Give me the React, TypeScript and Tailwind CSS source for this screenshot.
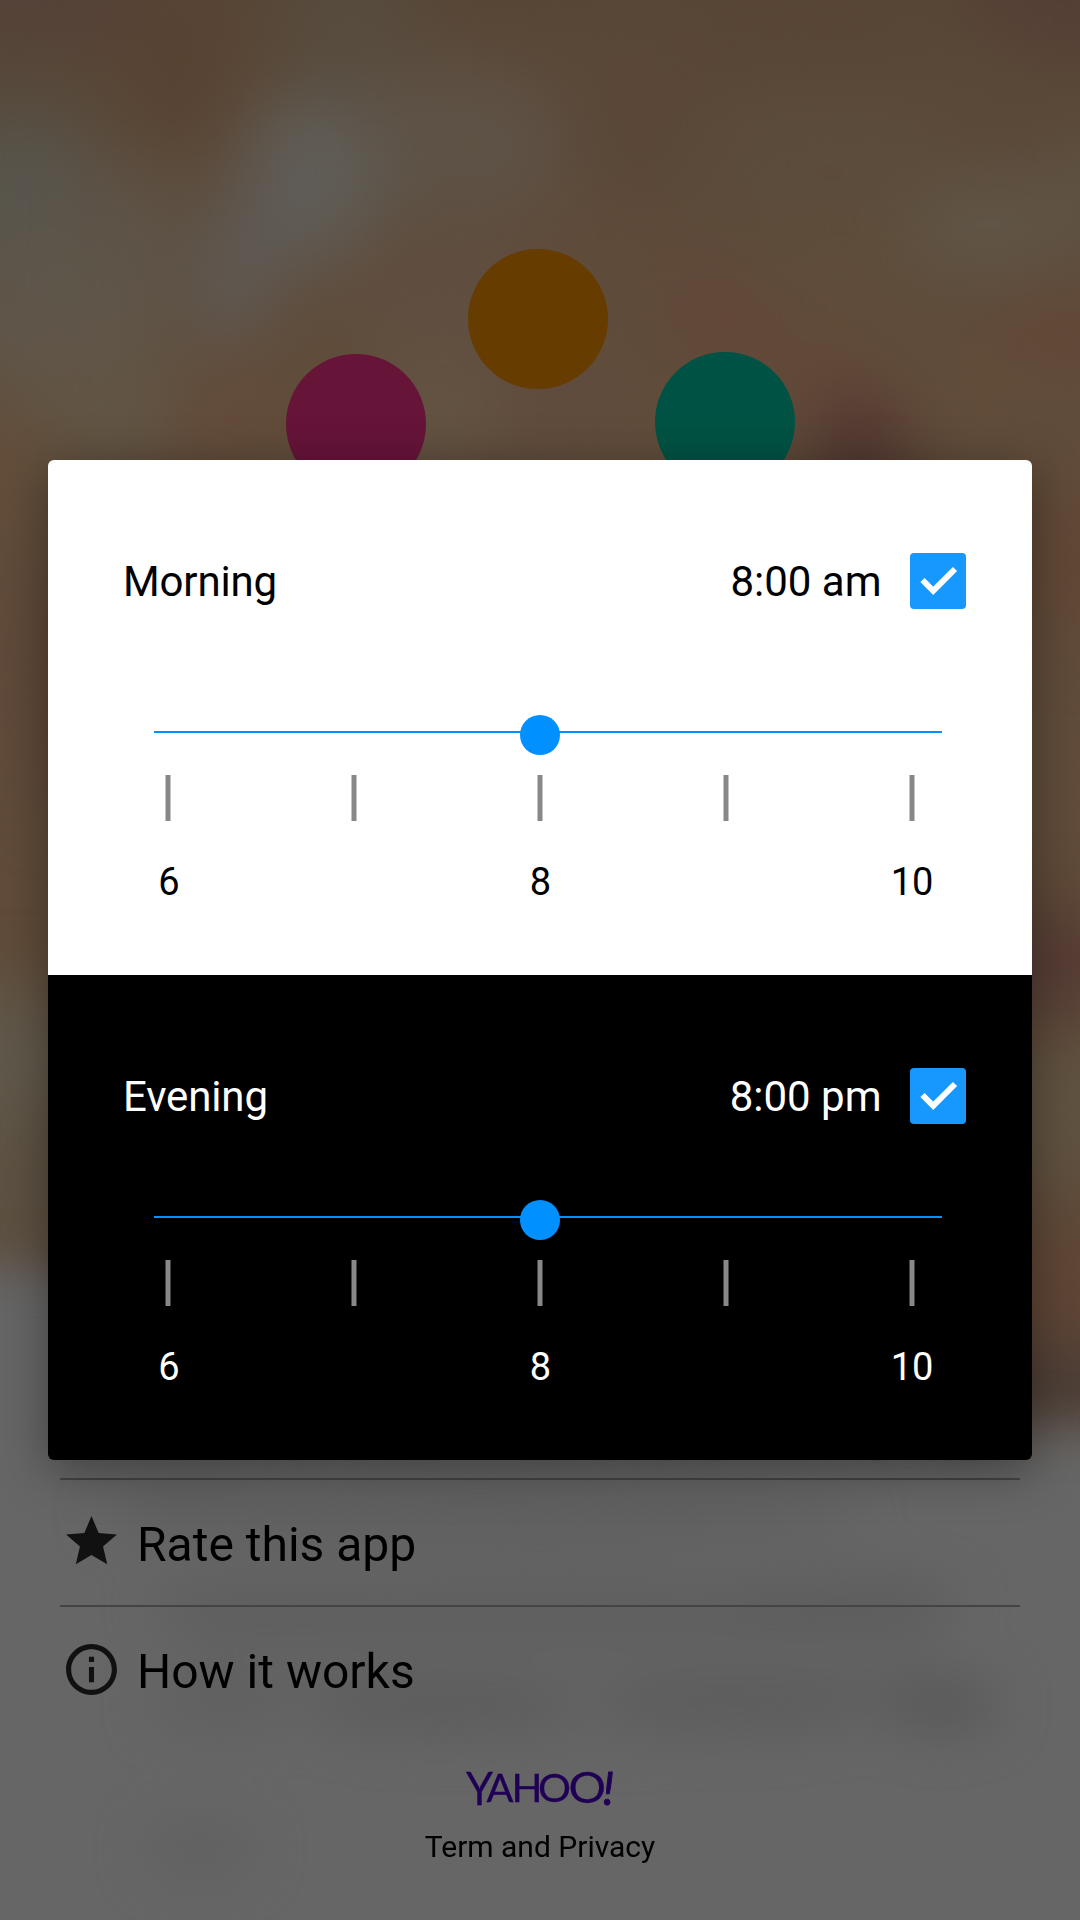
import React from "react";

type Blob = { x: number; y: number; rx: number; ry: number; c: string; r?: number };

const blobs: Blob[] = [
  { x: 20, y: -10, rx: 120, ry: 70, c: "#554238" },
  { x: 175, y: 60, rx: 60, ry: 90, c: "#584333" },
  { x: 350, y: 30, rx: 70, ry: 90, c: "#574c3e" },
  { x: 10, y: 110, rx: 90, ry: 50, c: "#564a3b" },
  { x: 640, y: 110, rx: 90, ry: 90, c: "#5a4737" },
  { x: 800, y: 30, rx: 120, ry: 40, c: "#584536" },
  { x: 820, y: 160, rx: 130, ry: 60, c: "#5c4c3b" },
  { x: 1070, y: 0, rx: 100, ry: 60, c: "#543f35" },
  { x: 1010, y: 100, rx: 70, ry: 60, c: "#5a4838" },
  { x: 450, y: 145, rx: 120, ry: 80, c: "#5e5246" },
  { x: 20, y: 200, rx: 90, ry: 75, c: "#58554d" },
  { x: 120, y: 230, rx: 70, ry: 60, c: "#5d5347" },
  { x: 60, y: 320, rx: 110, ry: 80, c: "#5f564a" },
  { x: 100, y: 410, rx: 80, ry: 70, c: "#615545" },
  { x: 310, y: 180, rx: 70, ry: 85, c: "#605d57" },
  { x: 245, y: 255, rx: 42, ry: 98, c: "#5f5a55", r: 18 },
  { x: 440, y: 300, rx: 110, ry: 50, c: "#604e40" },
  { x: 220, y: 425, rx: 45, ry: 80, c: "#634b39", r: 30 },
  { x: 10, y: 480, rx: 70, ry: 60, c: "#634e3a" },
  { x: 600, y: 245, rx: 90, ry: 40, c: "#604b3a" },
  { x: 440, y: 410, rx: 70, ry: 60, c: "#635343" },
  { x: 560, y: 410, rx: 70, ry: 60, c: "#604c3d" },
  { x: 840, y: 280, rx: 90, ry: 60, c: "#5f4d3a" },
  { x: 990, y: 228, rx: 85, ry: 50, c: "#605547" },
  { x: 1080, y: 200, rx: 50, ry: 50, c: "#5f5344" },
  { x: 1070, y: 332, rx: 100, ry: 40, c: "#624837" },
  { x: 720, y: 320, rx: 65, ry: 50, c: "#624739", r: 45 },
  { x: 820, y: 370, rx: 60, ry: 50, c: "#624938" },
  { x: 950, y: 410, rx: 80, ry: 60, c: "#614d3a" },
  { x: 860, y: 455, rx: 52, ry: 60, c: "#513631" },
  { x: 10, y: 1060, rx: 90, ry: 75, c: "#60594b" },
  { x: 10, y: 1190, rx: 90, ry: 70, c: "#5d5243" },
  { x: 60, y: 680, rx: 50, ry: 130, c: "#5f483a" },
  { x: 1070, y: 560, rx: 60, ry: 80, c: "#624836" },
  { x: 1060, y: 965, rx: 50, ry: 60, c: "#543934" },
  { x: 1060, y: 1110, rx: 80, ry: 80, c: "#605341" },
  { x: 1060, y: 1300, rx: 80, ry: 80, c: "#604636" },
  { x: 1070, y: 1390, rx: 80, ry: 40, c: "#483c37" },
];

const smudges: Blob[] = [
  { x: 190, y: 1505, rx: 60, ry: 25, c: "#5d5d5d" },
  { x: 480, y: 1515, rx: 380, ry: 30, c: "#5f5f5f" },
  { x: 560, y: 1650, rx: 380, ry: 90, c: "#636363" },
  { x: 290, y: 1608, rx: 140, ry: 30, c: "#5e5e5e" },
  { x: 540, y: 1612, rx: 360, ry: 28, c: "#5f5f5f" },
  { x: 840, y: 1605, rx: 120, ry: 30, c: "#5d5d5d" },
  { x: 220, y: 1705, rx: 70, ry: 26, c: "#606060" },
  { x: 440, y: 1708, rx: 130, ry: 30, c: "#5d5d5d" },
  { x: 740, y: 1704, rx: 140, ry: 30, c: "#5d5d5d" },
  { x: 940, y: 1705, rx: 60, ry: 30, c: "#5a5a5a" },
  { x: 200, y: 1850, rx: 55, ry: 30, c: "#616161" },
];

const ellipses = (items: Blob[]) =>
  items.map((b, i) => (
    <ellipse key={i} cx={b.x} cy={b.y} rx={b.rx} ry={b.ry} fill={b.c} transform={`rotate(${b.r ?? 0} ${b.x} ${b.y})`} />
  ));

function Backdrop() {
  return (
    <svg className="absolute inset-0" width="1080" height="1920" viewBox="0 0 1080 1920" aria-hidden="true">
      <defs>
        <linearGradient id="wash" x1="0" y1="0" x2="0" y2="1">
          <stop offset="0" stopColor="#584636" />
          <stop offset="0.08" stopColor="#5c4b3a" />
          <stop offset="0.22" stopColor="#614d3b" />
          <stop offset="0.5" stopColor="#614c39" />
          <stop offset="0.7" stopColor="#5e4a39" />
        </linearGradient>
        <filter id="soft" x="-20%" y="-20%" width="140%" height="140%" colorInterpolationFilters="sRGB">
          <feGaussianBlur stdDeviation="33" />
        </filter>
        <filter id="edge" x="-20%" y="-20%" width="140%" height="140%" colorInterpolationFilters="sRGB">
          <feGaussianBlur stdDeviation="24" />
        </filter>
      </defs>
      <rect width="1080" height="1920" fill="url(#wash)" />
      <g filter="url(#soft)">{ellipses(blobs)}</g>
      <path d="M-100 1262 L60 1266 L500 1330 L960 1425 L1180 1432 V2020 H-100Z" fill="#666" filter="url(#edge)" />
      <g filter="url(#edge)">{ellipses(smudges)}</g>
    </svg>
  );
}

function Checkbox() {
  return (
    <svg width="56" height="56" viewBox="0 0 56 56" role="img" aria-label="checked">
      <rect width="56" height="56" rx="4" fill="#1698ff" />
      <path d="M12.5 27 L23.2 37.8 L45 16" fill="none" stroke="#fff" strokeWidth="6" />
    </svg>
  );
}

function TimePanel(props: { label: string; time: string; dark?: boolean }) {
  const { label, time, dark } = props;
  return (
    <section className={dark ? "h-[485px] bg-black pt-[93px] text-white" : "h-[515px] bg-white pt-[93px] text-black"}>
      <div className="flex h-14 items-center pl-[75px] pr-[66.5px] text-[42px] leading-none">
        <span className="flex-1 pt-[2px] tracking-[-0.15px]">{label}</span>
        <span className="mr-[28px] pt-[2px]">{time}</span>
        <Checkbox />
      </div>
      <div className={dark ? "pl-[106px] pr-[90px] pt-[92px]" : "pl-[106px] pr-[90px] pt-[122px]"}>
        <div className="relative h-[2px] bg-[#0090ff]">
          <span className="absolute -top-[16px] left-[366px] size-10 rounded-full bg-[#0090ff]" />
        </div>
        <div className="ml-[11px] mt-[42px] flex w-[750px] justify-between">
          {[0, 1, 2, 3, 4].map((i) => (
            <span key={i} className="h-[46px] w-[6px] border-x border-[#888]/50 bg-[#888] bg-clip-padding" />
          ))}
        </div>
        <div className="-ml-[35px] mt-[39px] flex w-[843px] justify-between text-[38px] leading-[44px]">
          <span className="w-[100px] text-center">6</span>
          <span className="w-[100px] text-center">8</span>
          <span className="w-[100px] text-center">10</span>
        </div>
      </div>
    </section>
  );
}

function MenuRow(props: { label: string; children: React.ReactNode }) {
  return (
    <div className="flex h-[127px] items-center border-t-2 border-[#444]">
      <svg className="-mt-px ml-[1px]" width="61" height="61" viewBox="0 0 24 24" fill="#111" aria-hidden="true">
        {props.children}
      </svg>
      <span className="ml-[15px] pt-[4px] text-[48px] leading-none text-black">{props.label}</span>
    </div>
  );
}

const logoLetters = [
  { ch: "Y", x: 466, y: 1804.5, size: 47, w: 27 },
  { ch: "A", x: 486.5, y: 1801.5, size: 38, w: 27 },
  { ch: "H", x: 511.5, y: 1801.5, size: 38, w: 31 },
  { ch: "O", x: 538, y: 1801.5, size: 38, w: 33 },
  { ch: "O", x: 568.5, y: 1803, size: 43, w: 37.5 },
];

function YahooLogo() {
  return (
    <svg width="180" height="70" viewBox="450 1750 180 70" fill="#1f0054" stroke="#1f0054" role="img" aria-label="Yahoo!">
      <g strokeWidth="0.3" className="font-[Lato,sans-serif]">
        {logoLetters.map((l) => (
          <text key={l.x} x={l.x} y={l.y} fontSize={l.size} textLength={l.w} lengthAdjust="spacingAndGlyphs">
            {l.ch}
          </text>
        ))}
        <text x="602.5" y="1804.5" fontSize="46" fontStyle="italic" strokeWidth="0.9">!</text>
      </g>
    </svg>
  );
}

export default function App() {
  return (
    <main className="relative h-[1920px] w-[1080px] overflow-hidden bg-[#5f4c3a] font-[Roboto,sans-serif]">
      <Backdrop />
      <span className="absolute left-[468px] top-[249px] size-[140px] rounded-full bg-[#663c00]" />
      <span className="absolute left-[286px] top-[354px] size-[140px] rounded-full bg-[#661438]" />
      <span className="absolute left-[655px] top-[352px] size-[140px] rounded-full bg-[#005344]" />

      <div className="relative flex h-full flex-col px-[60px] pt-[1478px]">
        <MenuRow label="Rate this app">
          <path transform="translate(0 -0.4)" d="M12 17.27 18.18 21l-1.64-7.03L22 9.24l-7.19-.61L12 2 9.19 8.63 2 9.24l5.46 4.73L5.82 21z" />
        </MenuRow>
        <MenuRow label="How it works">
          <path d="M11 17h2v-6h-2v6zm1-15C6.48 2 2 6.48 2 12s4.48 10 10 10 10-4.48 10-10S17.52 2 12 2zm0 18c-4.41 0-8-3.59-8-8s3.59-8 8-8 8 3.59 8 8-3.59 8-8 8zM11 9h2V7h-2v2z" />
        </MenuRow>
        <div className="mt-[18px] flex flex-col items-center">
          <YahooLogo />
          <span className="mt-[9px] text-[30px] leading-[36px] text-black">Term and Privacy</span>
        </div>
      </div>

      <div className="absolute left-12 top-[460px] w-[984px] overflow-hidden rounded-[6px] shadow-[0_10px_50px_rgba(0,0,0,0.38)]" role="dialog">
        <TimePanel label="Morning" time="8:00 am" />
        <TimePanel label="Evening" time="8:00 pm" dark />
      </div>
    </main>
  );
}
